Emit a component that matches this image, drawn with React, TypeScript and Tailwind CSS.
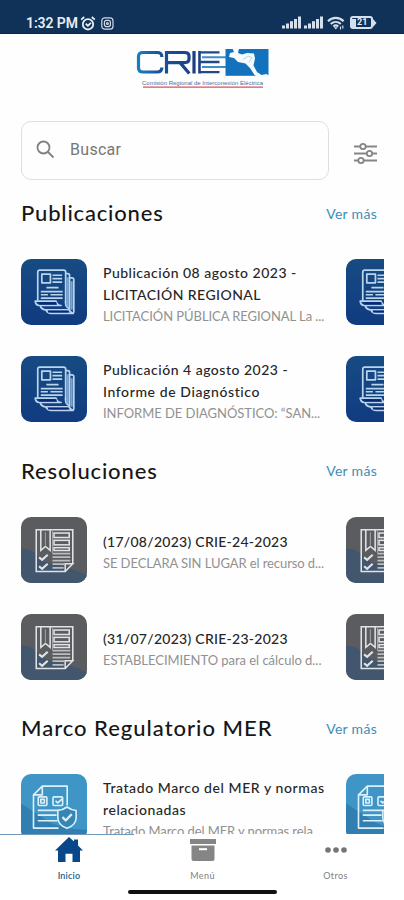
// Home screen of the CRIE mobile app: search, three carousels and the bottom tab bar.
import type { ReactNode } from "react";

interface Item {
  lines: { text: string; cls: string }[];
  excerpt: string;
  excerptCls: string;
}

interface SectionData {
  title: string;
  titleCls: string;
  icon: () => ReactNode;
  items: Item[];
}

// ---------- status bar ----------

function SignalBars() {
  return (
    <svg width="19" height="13" viewBox="0 0 19 13" fill="#d5e0ec">
      <rect x="0" y="9.500" width="3" height="3" />
      <rect x="4" y="7.500" width="3" height="5" />
      <rect x="8" y="5.200" width="3" height="7.300" />
      <rect x="12" y="3" width="3" height="9.500" />
      <rect x="16" y="0.500" width="3" height="12" />
    </svg>
  );
}

function StatusBar() {
  return (
    <div className="h-[34px] shrink-0 bg-[#103258] border-b border-[#0d2456] flex items-start justify-between pl-[26px] pr-[27px] pt-[14px] text-[#e8eef5]">
      <div className="flex items-center h-[18px]">
        <span className="w-[53px] text-[14px] font-semibold font-[Roboto,sans-serif] whitespace-nowrap tracking-[-0.1px]">1:32 PM</span>
        <svg className="ml-[1px]" width="16" height="15" viewBox="0 0 16 15" fill="none" stroke="currentColor" strokeWidth="1.8">
          <circle cx="8" cy="8.3" r="5.2" />
          <path d="M1.2 3.6 4.2 1M14.8 3.6 11.8 1M5.7 7.8l2.2 1.9 3-2.8" />
        </svg>
        <svg className="ml-[5px]" width="13" height="13" viewBox="0 0 13 13" fill="none" stroke="#cfdae6" strokeWidth="1.2">
          <rect x="0.8" y="0.8" width="11.2" height="11.4" rx="3" />
          <rect x="3.4" y="3.4" width="6" height="6.2" rx="2" />
          <circle cx="6.4" cy="6.5" r="0.9" />
        </svg>
      </div>
      <div className="flex items-center h-[17px]">
        <SignalBars />
        <span className="ml-[3px] flex"><SignalBars /></span>
        <svg className="ml-[4px]" width="18" height="14" viewBox="0 0 18 14" fill="none" stroke="#d5e0ec" strokeWidth="2.200">
          <path d="M1 5.2C5.4.8 12.2.8 16.6 5.2M3.8 8c2.900-2.700 7.100-2.700 10 0M6.4 10.500c1.400-1.300 3.400-1.300 4.800 0" />
          <path d="M6.800 11.300h4L8.8 13.500z" fill="#d5e0ec" stroke="none" />
          <path d="M13.500 10.5v3M15.800 9.5v3" strokeWidth="1.2" />
        </svg>
        <div className="ml-[5px] flex items-center">
          <div className="w-[23px] h-[13px] rounded-[3px] border-2 border-[#d5e0ec] flex items-center">
            <span className="w-[4px] h-[8px] bg-[#d5e0ec]" />
            <span className="ml-[1px] text-[9px] leading-[9px] font-bold font-[Roboto,sans-serif]">21</span>
          </div>
          <svg width="4" height="8" viewBox="0 0 4 8" fill="#d5e0ec"><path d="M0 0 3.500 4 0 8z" /></svg>
        </div>
      </div>
    </div>
  );
}

// ---------- logo ----------

function Logo() {
  return (
    <svg width="136" height="42" viewBox="0 0 136 42" fill="none">
      <defs>
        <linearGradient id="crie" x1="2" y1="0" x2="60" y2="0" gradientUnits="userSpaceOnUse">
          <stop stopColor="#1680c2" />
          <stop offset="0.4" stopColor="#19529b" />
          <stop offset="1" stopColor="#1c3f83" />
        </linearGradient>
      </defs>
      <g stroke="url(#crie)" strokeWidth="3.200">
        <path d="M26.800 10V9.500Q26.800 5.500 22 5.500H8Q3.500 5.500 3.500 9.500v11.500Q3.500 25 8 25h14q4.800 0 4.800-4v-.5" />
        <path d="M31.500 26.500V5.500h18Q54 5.500 54 9v3q0 3.600-4.500 3.600H31.500M45 15.600l9.300 10.900" />
        <path d="M59 4v22.500" />
      </g>
      <path d="M64.500 4v22.500" stroke="#1c3f83" strokeWidth="2.600" />
      <path d="M64.500 5.400h20M64.500 15h20M64.500 25.200h20" stroke="#234a86" strokeWidth="2.300" />
      <path d="M67 10.200h25M67 20h25" stroke="#3d8dc6" strokeWidth="2" />
      <rect x="90.500" y="2" width="43" height="26.800" fill="#1272bd" />
      <path
        d="M97.500 1.500h6.500l-1 4.500 4 1.500 5-1.500 7 .5 1 5-1.500 7 3.500 6.500 4.500 3 5-1 4 2.500-2 1-5-.5-4 1.500-5-3.500-4.500-7-4.500-4.500-7.500-1.500-4-4-5-1 1-4 4-1z"
        fill="#f7fbfe"
      />
      <path d="m108 12.500 5-3.500 4 1.500M117 10.500l-3 5" stroke="#a5cbe5" strokeWidth="0.8" />
      <text x="7" y="37.800" fontFamily="Liberation Sans, sans-serif" fontSize="6.200" fill="#4a6d9b" textLength="121" lengthAdjust="spacingAndGlyphs">
        Comisión Regional de Interconexión Eléctrica
      </text>
      <path d="M8 40.200h120" stroke="#d8505f" strokeWidth="1.200" />
    </svg>
  );
}

// ---------- tile icons ----------

function PublicationIcon() {
  return (
    <svg className="size-full" viewBox="0 0 65 65" fill="none">
      <defs>
        <linearGradient id="pub" x1="0" y1="0" x2="0" y2="1">
          <stop stopColor="#174b83" />
          <stop offset="1" stopColor="#103b80" />
        </linearGradient>
      </defs>
      <rect width="65" height="65" fill="url(#pub)" />
      <g stroke="#b9d5ec" strokeWidth="1.700" strokeLinejoin="round">
        <path d="M16.500 41V13q0-2 2-2h23.500q2 0 2 2v30.500" />
        <path d="M44 14.500h2q1.800 0 1.800 1.800V49M48 18.500h2.200q1.800 0 1.800 1.800V53" />
        <path d="M44 41v3q0 3 3 4.500 1 4 4.500 5H30q-4.500 0-5.500-4" />
        <path d="M14 41.500h20.500q1 4 5 4.300H18q-3.700-.3-4-4.300z" fill="#123d7f" />
        <path d="M19 46q.8 3.600 5 4h23" />
        <rect x="20.500" y="15" width="8.500" height="8.500" />
        <path d="M31 16h9.500M31 19.300h9.500M31 22.800h9.500M25 28.200h12M19.500 32.200h21.500M19.500 35.200h7M29 35.200h12M19.500 38.500h21.500" />
      </g>
      <path d="M46 18v29M49.800 22v28" stroke="#7ca8ce" strokeWidth="2.200" />
      <path d="M18 43.700h17M26.500 51.800h20" stroke="#0a2777" strokeWidth="2" />
    </svg>
  );
}

function ResolutionIcon() {
  return (
    <svg className="size-full" viewBox="0 0 65 65" fill="none">
      <rect width="65" height="65" fill="#5b5c5f" />
      <path d="M0 31q11 0 16 7t18 9 31 10v8H0z" fill="#42566d" />
      <g stroke="#e1e4e6" strokeWidth="1.500">
        <path d="M51 46V12.500H15v41.200h28.500L51 46h-7.500v7.700" />
        <path d="M19.500 12.500v20.300l4.600-3.800 4.600 3.800V12.500" />
        <path d="M17.800 39.700l3 2.500 5.500-5M17.800 48.500l3 2.500 5.500-5" strokeWidth="2.100" />
        <rect x="32.500" y="15.800" width="15" height="4.400" />
        <rect x="32.500" y="23" width="15" height="4.400" />
        <rect x="32.500" y="30.200" width="15" height="2.800" />
      </g>
      <path d="M31 36h17.500M31 39.500h17.500M31 43h17.500M31 46.500h12M31 50h11" stroke="#b9bdc0" strokeWidth="1.700" />
      <path d="M24 15v13M31 12.500v23" stroke="#a2a5a8" />
    </svg>
  );
}

function TreatyIcon() {
  return (
    <svg className="size-full" viewBox="0 0 65 65" fill="none">
      <rect width="65" height="65" fill="#3f95c6" />
      <path d="M0 29q14 9 26 17t39 9v10H0z" fill="#317fb0" />
      <g stroke="#dcf0fa" strokeWidth="1.600" strokeLinejoin="round">
        <path d="M45.500 31V12H21l-8.700 8.500v32.800H37M21 12v8.500h-8.700" />
        <rect x="17" y="22.500" width="8.500" height="8.500" rx="1" />
        <rect x="31.500" y="22.500" width="9.500" height="8.500" rx="1" />
        <path d="M19.500 25h3.500v3.500h-3.500zM34 26.500l2.200 2 4.300-4M16.500 35.800H38M16.500 40.500H35M16.500 46h19.500" />
        <path d="M45.300 32.500q4.400 3.300 9 3.500v7q0 7-9 10.500-9-3.500-9-10.500v-7q4.600-.2 9-3.500z" fill="#3685b5" />
        <path d="m40.800 42.500 3.200 3.200 6-6.200" strokeWidth="2.200" />
      </g>
    </svg>
  );
}

// ---------- content ----------

const SECTIONS: SectionData[] = [
  {
    title: "Publicaciones",
    titleCls: "tracking-[0.82px]",
    icon: PublicationIcon,
    items: [
      {
        lines: [
          { text: "Publicación 08 agosto 2023 -", cls: "tracking-[0.5px]" },
          { text: "LICITACIÓN REGIONAL", cls: "tracking-[0.45px]" },
        ],
        excerpt: "LICITACIÓN PÚBLICA REGIONAL La ...",
        excerptCls: "tracking-[-0.06px]",
      },
      {
        lines: [
          { text: "Publicación 4 agosto 2023 -", cls: "tracking-[0.5px]" },
          { text: "Informe de Diagnóstico", cls: "tracking-[0.6px]" },
        ],
        excerpt: "INFORME DE DIAGNÓSTICO: “SAN...",
        excerptCls: "tracking-[-0.04px]",
      },
    ],
  },
  {
    title: "Resoluciones",
    titleCls: "tracking-[0.85px]",
    icon: ResolutionIcon,
    items: [
      {
        lines: [{ text: "(17/08/2023) CRIE-24-2023", cls: "tracking-[0.27px]" }],
        excerpt: "SE DECLARA SIN LUGAR el recurso d...",
        excerptCls: "tracking-[-0.09px]",
      },
      {
        lines: [{ text: "(31/07/2023) CRIE-23-2023", cls: "tracking-[0.27px]" }],
        excerpt: "ESTABLECIMIENTO para el cálculo d...",
        excerptCls: "tracking-[-0.04px]",
      },
    ],
  },
  {
    title: "Marco Regulatorio MER",
    titleCls: "tracking-[0.98px]",
    icon: TreatyIcon,
    items: [
      {
        lines: [
          { text: "Tratado Marco del MER y normas", cls: "tracking-[0.58px]" },
          { text: "relacionadas", cls: "tracking-[0.55px]" },
        ],
        excerpt: "Tratado Marco del MER y normas rela...",
        excerptCls: "tracking-[-0.1px]",
      },
    ],
  },
];

function Row({ item, icon: Icon }: { item: Item; icon: () => ReactNode }) {
  return (
    <div className="flex h-[66px]">
      <div className="size-[66px] shrink-0 rounded-[10px] overflow-hidden"><Icon /></div>
      <div className="w-[243px] shrink-0 ml-[16px] pt-[5px] h-[66px] flex flex-col justify-center whitespace-nowrap">
        {item.lines.map((l) => (
          <p key={l.text} className="h-[22px] leading-[22px] text-[14px] font-medium text-[#262626]"><span className={l.cls}>{l.text}</span></p>
        ))}
        <p className="h-[21px] leading-[21px] text-[13px] text-[#919191]"><span className={item.excerptCls}>{item.excerpt}</span></p>
      </div>
      {/* next carousel card peeking in */}
      <div className="size-[66px] shrink-0 rounded-[10px] overflow-hidden"><Icon /></div>
    </div>
  );
}

function Section({ data }: { data: SectionData }) {
  return (
    <section className="h-[257.5px] shrink-0">
      <div className="flex items-center justify-between h-[28px] pr-[7px]">
        <h2 className="text-[22px] font-medium text-[#161616] whitespace-nowrap"><span className={data.titleCls}>{data.title}</span></h2>
        <span className="pt-[1px] text-[14px] text-[#3f8fb5] whitespace-nowrap"><span className="tracking-[0.3px]">Ver más</span></span>
      </div>
      <div className="mt-[32.500px] flex flex-col gap-[31px]">
        {data.items.map((it) => <Row key={it.excerpt} item={it} icon={data.icon} />)}
      </div>
    </section>
  );
}

function TabBar() {
  return (
    <nav className="h-[66px] shrink-0 bg-white flex flex-col">
      <div className="h-px w-[134px] bg-[#6f9abd]" />
      <div className="flex h-[53px] ml-[2px] text-[9px] text-[#808080]">
        <div className="w-[134px] flex flex-col items-center text-[#205f8b]">
          <svg className="mt-[2px]" width="28" height="26" viewBox="0 0 28 26" fill="#08488a">
            <path d="M14 0 19 4.600V2.500h4v6l5 5H25V25H17.500V16.800h-7V25H3V13.500H0z" />
          </svg>
          <span className="mt-[7px] leading-[12px] font-semibold tracking-[0.2px]">Inicio</span>
        </div>
        <div className="w-[133px] flex flex-col items-center">
          <svg className="mt-[4px]" width="26" height="23" viewBox="0 0 26 23" fill="#858585">
            <path d="M0 0h26v5H0zM1.500 6.500h23V20q0 2-2 2h-19q-2 0-2-2z" />
            <path d="M9 9.200h8v2H9z" fill="#fff" />
          </svg>
          <span className="mt-[8px] leading-[12px] tracking-[0.4px]">Menú</span>
        </div>
        <div className="w-[133px] flex flex-col items-center">
          <svg className="mt-[12px]" width="22" height="6" viewBox="0 0 22 6" fill="#757575">
            <circle cx="3" cy="3" r="2.800" /><circle cx="11" cy="3" r="2.800" /><circle cx="19" cy="3" r="2.800" />
          </svg>
          <span className="mt-[17px] leading-[12px] tracking-[0.4px]">Otros</span>
        </div>
      </div>
      <div className="mx-auto mt-[2px] w-[149px] h-[4px] rounded-full bg-[#111]" />
    </nav>
  );
}

export default function App() {
  return (
    <div className="w-[404px] h-[900px] overflow-hidden flex flex-col bg-[#fefefe] font-[Lato,sans-serif]">
      <StatusBar />
      <header className="h-[87px] shrink-0 pt-[13px] pl-[135px]"><Logo /></header>

      <div className="flex items-start shrink-0 pl-[21px]">
        <div className="w-[308px] h-[59px] rounded-[10px] border-[1.5px] border-[#dfdfdf] flex items-center pl-[14px]">
          <svg className="mb-[2px]" width="19" height="19" viewBox="0 0 19 19" fill="none" stroke="#808080" strokeWidth="1.800">
            <circle cx="7.500" cy="7.500" r="6" /><path d="m12 12 5.500 5.500" />
          </svg>
          <span className="ml-[15px] mb-[2px] text-[16px] text-[#777] font-[Roboto,sans-serif] tracking-[0.3px]">Buscar</span>
        </div>
        <svg className="mt-[21px] ml-[25px]" width="23" height="23" viewBox="0 0 23 23" fill="none" stroke="#858585" strokeWidth="1.800">
          <path d="M0 4.500h6M12 4.500h11M0 11.500h12.500M18.500 11.500H23M0 18.500h4M10 18.500h13" />
          <circle cx="9" cy="4.500" r="2.700" /><circle cx="15.500" cy="11.500" r="2.700" /><circle cx="7" cy="18.500" r="2.700" />
        </svg>
      </div>

      <main className="flex-1 min-h-0 overflow-hidden ml-[21px] mr-[20px] pt-[18.500px] flex flex-col">
        {SECTIONS.map((s) => <Section key={s.title} data={s} />)}
      </main>
      <TabBar />
    </div>
  );
}
